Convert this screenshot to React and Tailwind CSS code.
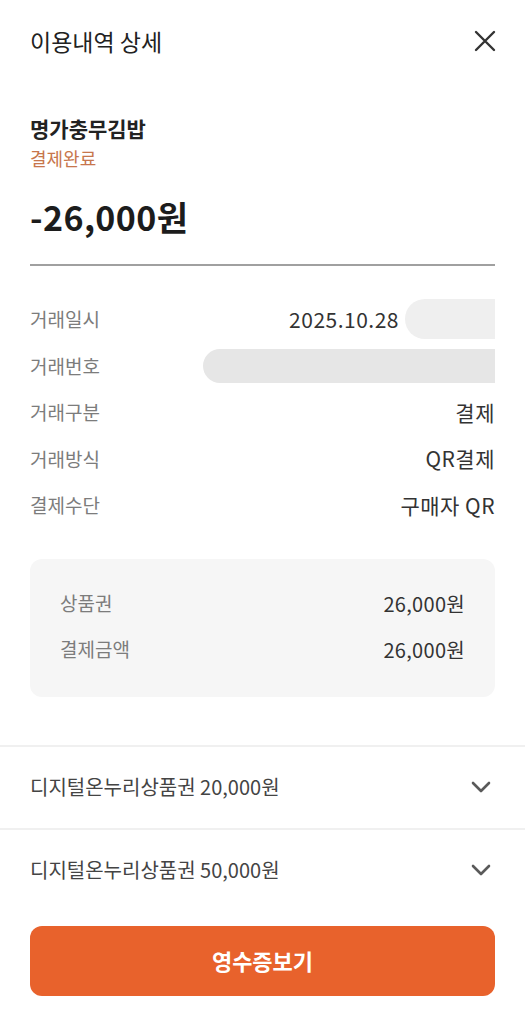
import React from "react";

const FONT = { fontFamily: '"Noto Sans CJK KR", "Noto Sans", sans-serif' };

function Chevron() {
  return (
    <svg width="20" height="12" viewBox="0 0 20 12" fill="none" className="shrink-0">
      <path d="M2 2l8 8 8-8" stroke="#5a5a5a" strokeWidth="2.6" strokeLinecap="round" strokeLinejoin="round" />
    </svg>
  );
}

function InfoRow({ label, children }) {
  return (
    <div className="flex h-[46.5px] items-center justify-between">
      <span className="text-[19px] text-[#7c7c7c]">{label}</span>
      {children}
    </div>
  );
}

export default function App() {
  return (
    <div className="min-h-[1024px] w-[525px] bg-white" style={FONT}>
      <div className="flex h-[82px] items-center justify-between px-[30px]">
        <span className="text-[23px] leading-[30px] text-[#222]">이용내역 상세</span>
        <svg width="24" height="24" viewBox="0 0 24 24" fill="none" className="mr-[-2px]">
          <path d="M3 3l18 18M21 3L3 21" stroke="#333" strokeWidth="2.4" strokeLinecap="round" />
        </svg>
      </div>

      <div className="px-[30px]">
        <div className="pt-[31px] text-[21px] font-bold leading-[30px] text-[#222]">명가충무김밥</div>
        <div className="mt-[3px] text-[18px] leading-[24px] text-[#c7764c]">결제완료</div>
        <div className="mt-[27px] text-[34px] font-bold leading-[40px] tracking-[0.4px] text-[#1c1c1c]">-26,000원</div>
        <div className="mt-[27px] h-[2px] bg-[#a0a0a0]" />

        <div className="mt-[30px]">
          <InfoRow label="거래일시">
            <div className="flex items-center">
              <span className="text-[21px] tracking-[0.5px] text-[#333]">2025.10.28</span>
              <span className="ml-[6px] h-[40px] w-[90px] rounded-l-full bg-[#efefef]" />
            </div>
          </InfoRow>
          <InfoRow label="거래번호">
            <span className="h-[34px] w-[292px] rounded-l-[18px] bg-[#e6e6e6]" />
          </InfoRow>
          <InfoRow label="거래구분">
            <span className="text-[21px] tracking-[0.5px] text-[#333]">결제</span>
          </InfoRow>
          <InfoRow label="거래방식">
            <span className="text-[21px] tracking-[0.5px] text-[#333]">QR결제</span>
          </InfoRow>
          <InfoRow label="결제수단">
            <span className="text-[21px] tracking-[0.5px] text-[#333]">구매자 QR</span>
          </InfoRow>
        </div>

        <div className="mt-[30px] rounded-[12px] bg-[#f6f6f6] px-[30px] pb-[24px] pt-[22px]">
          <div className="flex h-[46px] items-center justify-between">
            <span className="text-[19px] text-[#7c7c7c]">상품권</span>
            <span className="text-[20px] tracking-[0.3px] text-[#333]">26,000원</span>
          </div>
          <div className="flex h-[46px] items-center justify-between">
            <span className="text-[19px] text-[#7c7c7c]">결제금액</span>
            <span className="text-[20px] tracking-[0.3px] text-[#333]">26,000원</span>
          </div>
        </div>
      </div>

      <div className="mt-[48px] h-[2px] bg-[#f0f0f0]" />
      <div className="flex h-[81px] items-center justify-between pl-[30px] pr-[34px]">
        <span className="text-[20px] text-[#444]">디지털온누리상품권 20,000원</span>
        <Chevron />
      </div>
      <div className="h-[2px] bg-[#f0f0f0]" />
      <div className="flex h-[81px] items-center justify-between pl-[30px] pr-[34px]">
        <span className="text-[20px] text-[#444]">디지털온누리상품권 50,000원</span>
        <Chevron />
      </div>

      <div className="px-[30px] pt-[15px]">
        <button className="flex h-[70px] w-full items-center justify-center rounded-[12px] bg-[#e8622c] text-[22px] font-bold text-white">
          영수증보기
        </button>
      </div>
    </div>
  );
}
